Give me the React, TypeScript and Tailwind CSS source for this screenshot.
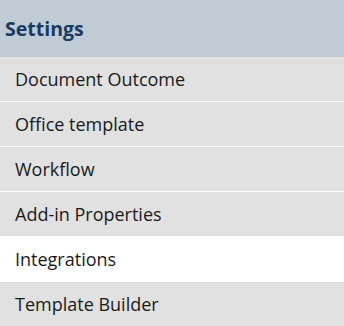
import React from "react";

const items = [
  "Document Outcome",
  "Office template",
  "Workflow",
  "Add-in Properties",
  "Integrations",
  "Template Builder",
];

export default function App() {
  return (
    <div
      className="w-[344px] h-[326px] bg-white overflow-hidden"
      style={{ fontFamily: '"Open Sans", sans-serif' }}
    >
      <div className="h-[57px] bg-[#bfccd6] flex items-center pl-[5px]">
        <span className="text-[19.5px] font-bold text-[#1b3a61] leading-none">Settings</span>
      </div>
      <div className="flex flex-col">
        {items.map((t) => (
          <div
            key={t}
            className={
              "h-[45px] flex items-center pl-[15px] text-[18px] text-[#1a1a1a] border-b border-white " +
              (t === "Integrations" ? "bg-white" : "bg-[#e1e1e1]")
            }
          >
            {t}
          </div>
        ))}
      </div>
    </div>
  );
}
